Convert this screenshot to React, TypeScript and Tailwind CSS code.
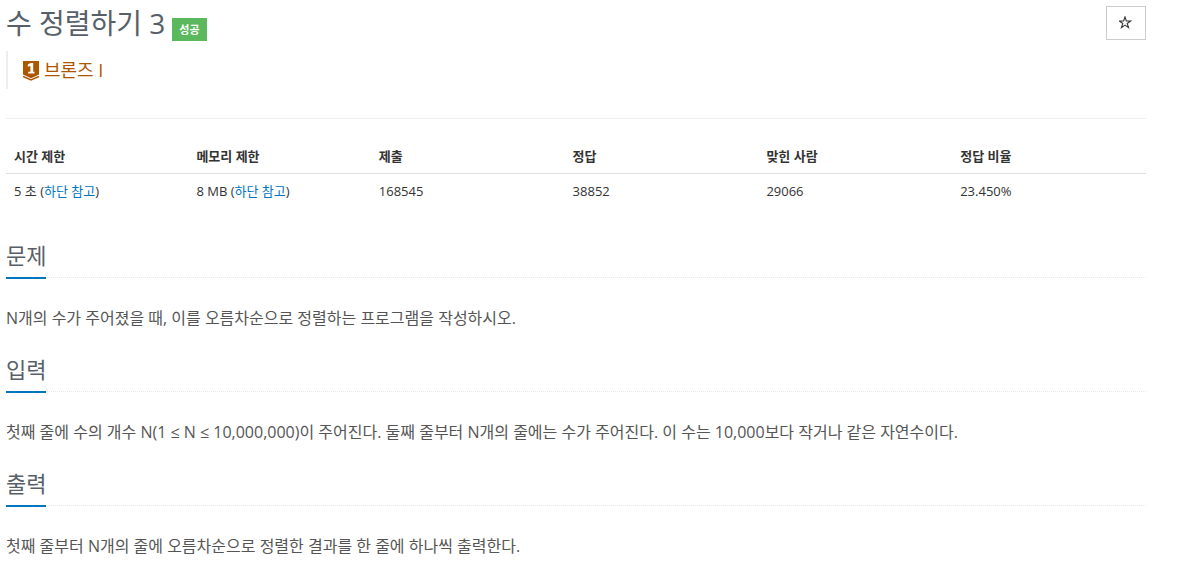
const headers = ['시간 제한', '메모리 제한', '제출', '정답', '맞힌 사람', '정답 비율'];

const sections = [
  { id: 'description', title: '문제', text: 'N개의 수가 주어졌을 때, 이를 오름차순으로 정렬하는 프로그램을 작성하시오.' },
  { id: 'input', title: '입력', text: '첫째 줄에 수의 개수 N(1 ≤ N ≤ 10,000,000)이 주어진다. 둘째 줄부터 N개의 줄에는 수가 주어진다. 이 수는 10,000보다 작거나 같은 자연수이다.' },
  { id: 'output', title: '출력', text: '첫째 줄부터 N개의 줄에 오름차순으로 정렬한 결과를 한 줄에 하나씩 출력한다.' },
];

function TierBadge() {
  return (
    <svg viewBox="0 0 16 22" className="h-[22px] w-4" aria-hidden="true">
      <path d="M0 2h16v13.6l-8 3.6-8-3.6z" fill="#ad5600" />
      <path d="M0 17.4l8 3.6 8-3.6" fill="none" stroke="#ad5600" strokeWidth="1.4" />
      <path d="M7.6 4h2.6v8.8h1.3v1.6H5.2v-1.6h2.2V7L4.8 7.8V5.6z" fill="#fff" />
    </svg>
  );
}

function StarIcon() {
  return (
    <svg viewBox="0 0 14 14" className="size-3.5" aria-hidden="true">
      <path
        d="M6 0.9l1.35 4.1h4.3L8.2 7.5l1.35 4.1L6 9.1l-3.55 2.5L3.8 7.5 0.35 5h4.3z"
        fill="none"
        stroke="#333"
        strokeWidth="1.1"
      />
    </svg>
  );
}

export default function App() {
  return (
    <main className="pl-1.5 pr-[43px] font-['Open_Sans','Noto_Sans_CJK_KR',sans-serif] text-[#333]">
      <header className="flex items-start justify-between">
        <h1 className="flex items-center gap-[7px] pt-[5px] text-[28px] font-normal leading-9 text-[#585f69]">
          수 정렬하기 3
          <span className="mt-3 bg-[#5cb85c] px-[7px] text-[11px] font-bold leading-[23px] text-white">성공</span>
        </h1>
        <button aria-label="즐겨찾기" className="mt-1.5 flex h-[34px] w-10 items-center justify-center border border-[#ccc]">
          <StarIcon />
        </button>
      </header>
      <blockquote className="mt-2.5 flex h-[38px] items-center gap-[5px] border-l-2 border-[#eee] pl-[15px] text-lg text-[#ad5600]">
        <TierBadge />
        브론즈 I
      </blockquote>
      <hr className="mt-[29px] border-[#eee]" />
      <table className="mt-5 w-full table-fixed text-left text-[13px]">
        <colgroup>
          <col className="w-[16%]" />
          <col className="w-[16%]" />
          <col className="w-[17%]" />
          <col className="w-[17%]" />
          <col className="w-[17%]" />
          <col className="w-[17%]" />
        </colgroup>
        <thead>
          <tr className="border-b border-[#ddd]">
            {headers.map((h) => <th key={h} className="p-2 font-bold leading-[18px]">{h}</th>)}
          </tr>
        </thead>
        <tbody>
          <tr className="align-baseline leading-[18px]">
            <td className="p-2">5 초 (<a href="#limits" className="text-[#0076c0]">하단 참고</a>)</td>
            <td className="p-2">8 MB (<a href="#limits" className="text-[#0076c0]">하단 참고</a>)</td>
            <td className="p-2">168545</td>
            <td className="p-2">38852</td>
            <td className="p-2">29066</td>
            <td className="p-2">23.450%</td>
          </tr>
        </tbody>
      </table>
      <div className="mt-8 flex flex-col gap-6">
        {sections.map((s) => (
          <section key={s.id} id={s.id}>
            <div className="flex border-b border-dotted border-[#e4e9f0]">
              <h2 className="-mb-0.5 border-b-2 border-[#0076c0] pb-[7px] text-[22px] leading-[30px] text-[#585f69]">{s.title}</h2>
            </div>
            <p className="mt-7 text-base text-[#555]">{s.text}</p>
          </section>
        ))}
      </div>
    </main>
  );
}
